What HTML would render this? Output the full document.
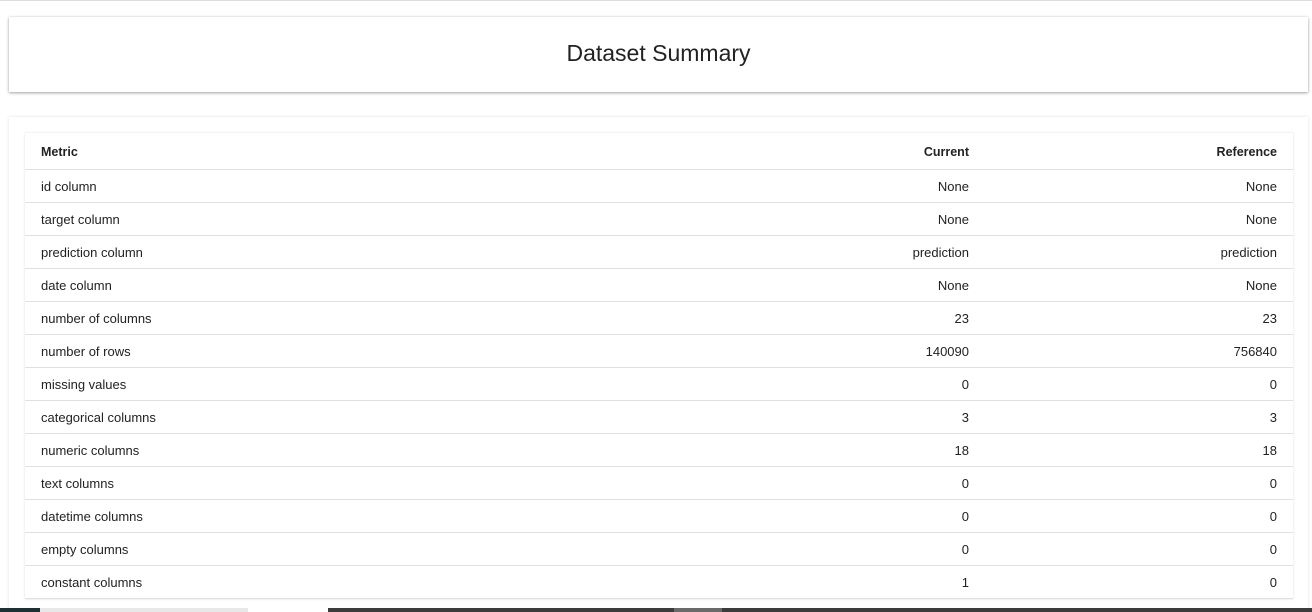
<!DOCTYPE html>
<html style="overflow:hidden;height:612px"><head><style>
body{margin:0;width:1312px;height:612px;overflow:hidden;background:#fff;font-family:"Liberation Sans",sans-serif;color:#222;position:relative}
.top{position:absolute;left:0;top:0;width:1312px;height:1px;background:#ddd}
.c1{position:absolute;left:9px;top:17px;width:1299px;height:75px;background:#fff;box-shadow:0 1px 3px rgba(0,0,0,.35),0 0 2px rgba(0,0,0,.08)}
.c1 h1{margin:0;font-weight:normal;font-size:23px;text-align:center;line-height:73px;color:#222}
.c2{position:absolute;left:9px;top:117px;width:1299px;height:495px;overflow:hidden;background:#fff;box-shadow:0 0 3px rgba(0,0,0,.12)}
.tb{position:absolute;left:16px;top:16px;width:1268px;box-shadow:0 0 2px rgba(0,0,0,.15)}
table{border-collapse:collapse;width:100%;font-size:13px}
td,th{height:32px;border-bottom:1px solid #e0e0e0;padding:0 16px;text-align:right}
th{height:34px;font-weight:bold;font-size:12.5px;padding-top:2px}
td:first-child,th:first-child{text-align:left}
.c{width:300px}
.bar{position:absolute;top:608px;height:4px}
</style></head><body>
<div class="top"></div>
<div class="c1"><h1>Dataset Summary</h1></div>
<div class="c2"><div class="tb"><table>
<tr><th>Metric</th><th class="c">Current</th><th class="c" style="width:276px">Reference</th></tr>
<tr><td>id column</td><td>None</td><td>None</td></tr>
<tr><td>target column</td><td>None</td><td>None</td></tr>
<tr><td>prediction column</td><td>prediction</td><td>prediction</td></tr>
<tr><td>date column</td><td>None</td><td>None</td></tr>
<tr><td>number of columns</td><td>23</td><td>23</td></tr>
<tr><td>number of rows</td><td>140090</td><td>756840</td></tr>
<tr><td>missing values</td><td>0</td><td>0</td></tr>
<tr><td>categorical columns</td><td>3</td><td>3</td></tr>
<tr><td>numeric columns</td><td>18</td><td>18</td></tr>
<tr><td>text columns</td><td>0</td><td>0</td></tr>
<tr><td>datetime columns</td><td>0</td><td>0</td></tr>
<tr><td>empty columns</td><td>0</td><td>0</td></tr>
<tr><td>constant columns</td><td>1</td><td>0</td></tr>
</table></div></div>
<div class="bar" style="left:0;width:40px;background:#1f3035"></div>
<div class="bar" style="left:40px;width:208px;background:#e8e8e8"></div>
<div class="bar" style="left:248px;width:80px;background:#fff"></div>
<div class="bar" style="left:328px;width:346px;background:#3c3c3c"></div>
<div class="bar" style="left:674px;width:48px;background:#6a6a6a"></div>
<div class="bar" style="left:722px;width:590px;background:#3c3c3c"></div>
</body></html>
